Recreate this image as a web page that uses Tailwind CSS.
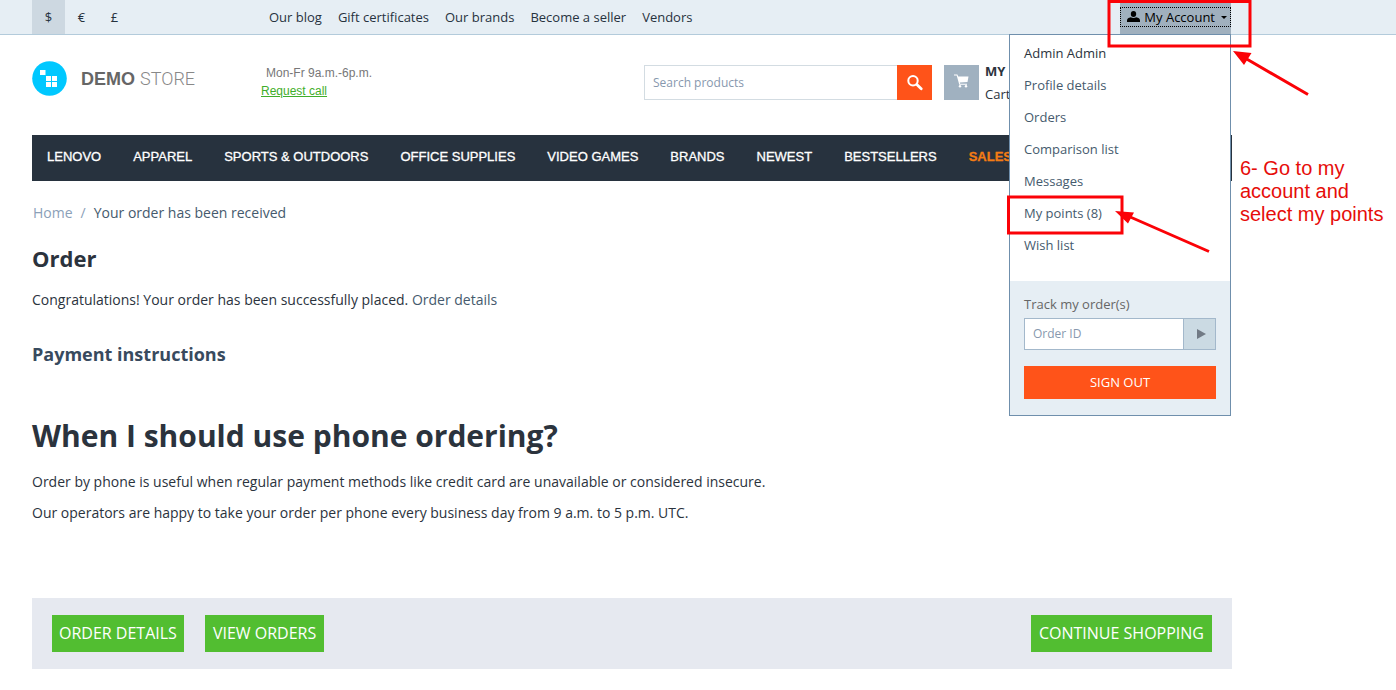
<!DOCTYPE html>
<html lang="en">
<head>
    <meta charset="UTF-8">
    <meta name="viewport" content="width=device-width, initial-scale=1.0">
    <title>Your order has been received</title>
    <script src="https://cdn.jsdelivr.net/npm/@tailwindcss/browser@4"></script>
</head>
<body class="bg-white font-['Open_Sans',sans-serif] text-sm text-[#2b333d]">
    <!-- Top bar -->
    <div class="bg-[#e6eef4] border-b border-[#b3cbdb] px-8">
        <div class="relative flex justify-between max-w-[1200px] h-[34px] text-[13px] text-[#26323e]">
            <div class="flex">
                <button class="w-[33px] bg-[#cdd8e1] font-medium">$</button>
                <button class="w-[33px]">€</button>
                <button class="w-[33px]">£</button>
                <nav class="flex items-center gap-4 ml-[138px]">
                    <a href="#">Our blog</a>
                    <a href="#">Gift certificates</a>
                    <a href="#">Our brands</a>
                    <a href="#">Become a seller</a>
                    <a href="#">Vendors</a>
                </nav>
            </div>

            <div class="flex items-center bg-[#a0b0be] mr-px">
                <button class="flex items-center h-5 pl-1.5 pr-[3px] border border-dotted border-black text-black">
                    <svg class="w-[13px] h-3 mr-1" viewBox="0 0 13 12" fill="currentColor">
                        <ellipse cx="6.500" cy="3" rx="2.700" ry="3"/>
                        <path d="M3.700 6.200q2.800 1.600 5.600 0l2.200.9Q13 7.800 13 9.500V11H0V9.500q0-1.700 1.500-2.400z"/>
                    </svg>
                    My Account
                    <svg class="w-1.5 h-[3px] ml-1.5" viewBox="0 0 6 3" fill="currentColor"><path d="M0 0h6L3 3z"/></svg>
                </button>
            </div>

            <!-- Account menu -->
            <div class="absolute z-10 top-[34px] right-px w-[222px] border border-[#6f8fac] bg-white">
                <ul class="px-3.5 pt-0.5 pb-[20px] leading-8 text-[#455a6d]">
                    <li class="text-[#2b333d]">Admin Admin</li>
                    <li><a href="#">Profile details</a></li>
                    <li><a href="#">Orders</a></li>
                    <li><a href="#">Comparison list</a></li>
                    <li><a href="#">Messages</a></li>
                    <li><a href="#">My points (8)</a></li>
                    <li><a href="#">Wish list</a></li>
                </ul>
                <div class="bg-[#e6eef4] px-3.5 pt-3.5 pb-4">
                    <label for="track" class="block h-[23px] leading-[18px] text-[#666]">Track my order(s)</label>
                    <div class="flex h-8 border border-[#a3b8cb] bg-white">
                        <input id="track" type="text" placeholder="Order ID" class="flex-1 min-w-0 px-2 text-xs placeholder:text-[#8798ae] outline-none">
                        <button aria-label="Track" class="flex items-center justify-center w-8 pl-1 bg-[#cbdae3] border-l border-[#a3b8cb] text-[#717a85]">
                            <svg class="w-[9px] h-2.5" viewBox="0 0 9 10" fill="currentColor"><path d="M0 0l9 5-9 5z"/></svg>
                        </button>
                    </div>
                    <button class="block w-full h-[33px] mt-4 bg-[#ff5319] text-white font-medium">SIGN OUT</button>
                </div>
            </div>

            <!-- Walkthrough marks -->
            <svg class="absolute z-20 top-0 left-[968px] w-[320px] h-[260px] pointer-events-none" viewBox="1000 0 320 260" fill="none" stroke="#fb0207" stroke-width="3">
                <rect x="1109" y="1.500" width="141" height="44.500"/>
                <rect x="1008.500" y="197" width="113.500" height="36"/>
                <path d="M1308 94.500L1245 58M1209 251.500L1128 216" />
                <path d="M1233 51l18.500 2-7.500 12zM1115 211l19 1.500-6 11z" fill="#fb0207" stroke="none"/>
            </svg>
            <p class="absolute z-20 top-[157px] left-[1208px] w-[150px] font-['Liberation_Sans',sans-serif] text-xl leading-[23px] text-[#e60d0a]">6- Go to my account and select my points</p>
        </div>
    </div>

    <div class="px-8">
        <div class="max-w-[1200px]">
            <!-- Header -->
            <header class="flex h-[100px] pt-[26px]">
                <a href="#" class="flex items-center h-[35px] w-[229px] font-['Liberation_Sans',sans-serif] text-lg text-[#666]">
                    <svg class="w-[35px] h-[35px] mr-3.5" viewBox="0 0 35 35">
                        <circle cx="17.500" cy="17.500" r="17.300" fill="#00c8ff"/>
                        <path d="M8 9h5.500v5H8zM14 15h5v5h-5zM20 15h5v5h-5zM14 21h5v5h-5zM20 21h5v5h-5z" fill="#fff"/>
                    </svg>
                    <span><b>DEMO</b> <span class="font-['Roboto',sans-serif] font-light text-[#888]">STORE</span></span>
                </a>
                <div class="font-['Liberation_Sans',sans-serif] text-xs leading-[18px] pt-[3px]">
                    <p class="pl-[5px] text-[#777]">Mon-Fr 9a.m.-6p.m.</p>
                    <a href="#" class="text-[#3fae2a] underline">Request call</a>
                </div>
                <form class="flex h-[35px] w-[288px] mt-1 ml-auto">
                    <input type="text" aria-label="Search products" placeholder="Search products" class="flex-1 min-w-0 px-2 border border-r-0 border-[#d3dce2] text-xs placeholder:text-[#8798ae] outline-none">
                    <button type="button" aria-label="Search" class="flex items-center justify-center w-[35px] bg-[#ff5319] text-white">
                        <svg class="w-4 h-4" viewBox="0 0 16 16" fill="none" stroke="currentColor" stroke-width="2"><circle cx="6" cy="5.800" r="4.700"/><path d="M9.800 9.600l4.400 4.200" stroke-width="2.800" stroke-linecap="round"/></svg>
                    </button>
                </form>
                <a href="#" class="flex w-[288px] ml-3 mt-1 text-[13px] leading-[23px]">
                    <span class="flex items-start justify-center w-[35px] h-[35px] pt-[9px] bg-[#a0b1c0] text-white mr-1.5">
                        <svg class="w-[15px] h-[14px]" viewBox="0 0 15 14" fill="currentColor">
                            <path d="M0 .5h3.400l.8 1.900H14.500l-1 5.600-7.700.6.400 1.200H13v1H5.300L2.700 1.500H0z"/>
                            <circle cx="6" cy="12.200" r="1.200"/><circle cx="12" cy="12.200" r="1.200"/>
                        </svg>
                    </span>
                    <span class="-mt-[5px]"><b class="block">MY</b>Cart</span>
                </a>
            </header>

            <!-- Main menu -->
            <nav class="flex gap-8 h-[46px] px-[15px] pt-3 bg-[#27323e] font-['Liberation_Sans',sans-serif] text-[13px] leading-5 font-medium text-white [-webkit-text-stroke:0.3px]">
                <a href="#">LENOVO</a>
                <a href="#">APPAREL</a>
                <a href="#">SPORTS &amp; OUTDOORS</a>
                <a href="#">OFFICE SUPPLIES</a>
                <a href="#">VIDEO GAMES</a>
                <a href="#">BRANDS</a>
                <a href="#">NEWEST</a>
                <a href="#">BESTSELLERS</a>
                <a href="#" class="font-bold text-[#f47c14]">SALES</a>
            </nav>

            <!-- Breadcrumbs -->
            <div class="flex gap-2 mt-[22px] pl-px leading-5 text-[#8ba0b8]">
                <a href="#">Home</a>
                <span>/</span>
                <span class="text-[#455a6d]">Your order has been received</span>
            </div>

            <main>
                <h1 class="mt-5 text-[22px] leading-[30px] font-bold">Order</h1>
                <p class="mt-[17px] leading-5">Congratulations! Your order has been successfully placed. <a href="#" class="text-[#455a6d]">Order details</a></p>
                <h2 class="mt-8 text-lg leading-6 font-bold text-[#384a5e]">Payment instructions</h2>
                <h2 class="mt-[50px] text-[30px] leading-10 font-bold">When I should use phone ordering?</h2>
                <p class="mt-4 leading-5">Order by phone is useful when regular payment methods like credit card are unavailable or considered insecure.</p>
                <p class="mt-[11px] leading-5">Our operators are happy to take your order per phone every business day from 9 a.m. to 5 p.m. UTC.</p>

                <div class="flex gap-[21px] mt-[75px] px-5 py-[17px] bg-[#e6e9f0] text-base text-white">
                    <button class="h-[37px] px-[7px] pb-0.5 bg-[#52be31]">ORDER DETAILS</button>
                    <button class="h-[37px] px-2 pb-0.5 bg-[#52be31]">VIEW ORDERS</button>
                    <button class="h-[37px] px-2 pb-0.5 ml-auto bg-[#52be31]">CONTINUE SHOPPING</button>
                </div>
            </main>
        </div>
    </div>
</body>
</html>
